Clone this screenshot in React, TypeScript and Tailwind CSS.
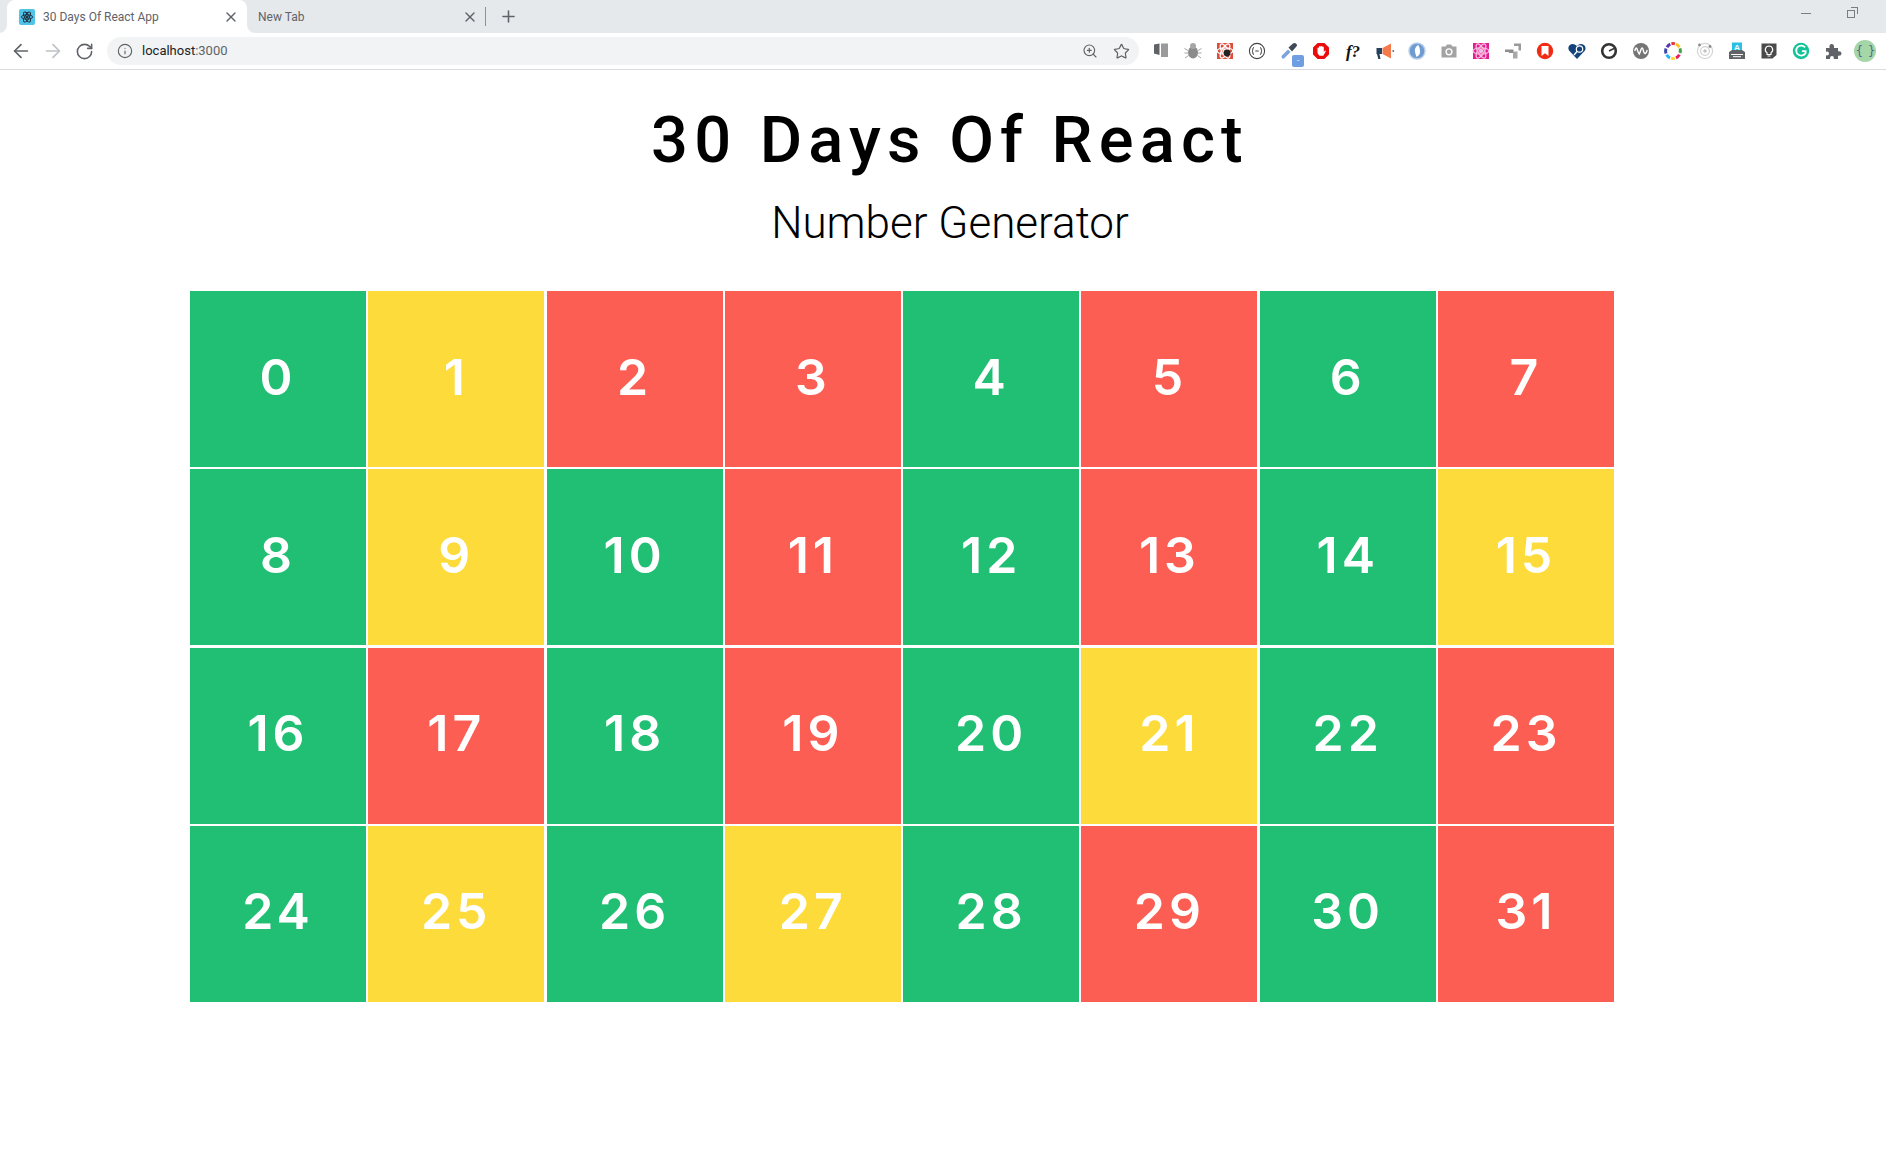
import React from "react";
import { ArrowLeft, ArrowRight, RotateCw, Info, ZoomIn, Star, X, Plus } from "lucide-react";

const G = "bg-[#21bf73]";
const Y = "bg-[#fddb3a]";
const R = "bg-[#fd5e53]";
const colors = [
  G, Y, R, R, G, R, G, R,
  G, Y, G, R, G, R, G, Y,
  G, R, G, R, G, Y, G, R,
  G, Y, G, Y, G, R, G, R,
];

function S({ children, w = 20 }: { children: React.ReactNode; w?: number }) {
  return (
    <svg width={w} height={w} viewBox="0 0 20 20">
      {children}
    </svg>
  );
}

const atom = (stroke: string) => (
  <g fill="none" stroke={stroke} strokeWidth="1.3">
    <ellipse cx="10" cy="10" rx="8" ry="3.2" />
    <ellipse cx="10" cy="10" rx="8" ry="3.2" transform="rotate(60 10 10)" />
    <ellipse cx="10" cy="10" rx="8" ry="3.2" transform="rotate(120 10 10)" />
    <circle cx="10" cy="10" r="1.6" fill={stroke} />
  </g>
);

const extensions: React.ReactNode[] = [
  <S key="a">
    <path d="M3 3.5 8.5 2.5V14L3 12.5Z" fill="#5f6368" />
    <rect x="10" y="2.5" width="7" height="13.5" fill="#9a9a9a" />
  </S>,
  <S key="b">
    <ellipse cx="10" cy="11.5" rx="5" ry="6" fill="#8b8b8b" />
    <circle cx="10" cy="5" r="3" fill="#a5a5a5" />
    <path d="M1.5 7.5 5 9.5M1.5 12H5M2 17 5.5 14.5M18.5 7.5 15 9.5M18.5 12H15M18 17 14.5 14.5" stroke="#a5a5a5" strokeWidth="1" />
  </S>,
  <S key="c">
    <rect x="2" y="2" width="16" height="16" fill="#de4c3c" />
    {atom("#ffffff")}
    <circle cx="12" cy="12" r="3.4" fill="#222222" />
  </S>,
  <S key="d">
    <circle cx="10" cy="10" r="7.6" fill="none" stroke="#444444" strokeWidth="1.1" />
    <path d="M7 6.5Q5.8 6.5 5.8 8V9.2L5 10 5.8 10.8V12Q5.8 13.5 7 13.5M13 6.5Q14.2 6.5 14.2 8V9.2L15 10 14.2 10.8V12Q14.2 13.5 13 13.5M8.3 10H11.7" fill="none" stroke="#444444" strokeWidth="1" />
  </S>,
  <div key="e" className="relative">
    <S>
      <path d="M3 17.5 2.5 15 9 8.5 11.5 11 5 17.5Z" fill="#7aa3dd" />
      <path d="M9.5 6.5 14 2.5Q16 1.5 17.5 3T17 6L13 10.5Z" fill="#3f4a57" />
    </S>
    <div className="absolute right-[-5px] bottom-[-6px] flex h-[12px] w-[12px] items-center justify-center rounded-[2px] bg-[#6f9fe2] text-[8px] leading-none text-white">
      -
    </div>
  </div>,
  <S key="f">
    <path d="M6.6 2H13.4L18 6.6V13.4L13.4 18H6.6L2 13.4V6.6Z" fill="#ea0c0c" />
    <path d="M6.5 9.5V6.8Q7.5 6 8 7V5.5Q9 4.6 9.7 5.5 10.7 4.6 11.4 5.7 12.5 5.2 12.8 6.5V11L14 9.5Q15 9.5 14.6 10.7L12.3 14.8H8.4L6.5 12Z" fill="#ffffff" />
  </S>,
  <div key="g" className="font-['Liberation_Serif',serif] text-[17px] font-bold italic leading-none text-[#111111]">
    f?
  </div>,
  <S key="h">
    <path d="M1.5 7H7V13H4.5L5.5 18H3.3L2 13H1.5Z" fill="#24425f" />
    <path d="M7.5 7 16 2.5V17.5L7.5 13Z" fill="#f47a4b" />
    <rect x="17.5" y="9.3" width="1.6" height="1.4" fill="#24425f" />
  </S>,
  <S key="i">
    <circle cx="10" cy="10" r="8" fill="#6f9bd1" />
    <circle cx="10" cy="10" r="8" fill="none" stroke="#b8cfe8" strokeWidth="1.4" />
    <path d="M11 4Q7 7 8 11T9.5 16Q13.5 14 13 9.5T11 4Z" fill="#ffffff" />
  </S>,
  <S key="j">
    <path d="M2.5 5.5H6.5L8 3.5H12L13.5 5.5H17.5V16.5H2.5Z" fill="#a3a3a3" />
    <circle cx="10" cy="10.8" r="3.6" fill="#ffffff" />
    <circle cx="10" cy="10.8" r="2.2" fill="#a3a3a3" />
  </S>,
  <S key="k">
    <rect x="2" y="2" width="16" height="16" fill="#e21f91" />
    {atom("#f7bde0")}
  </S>,
  <S key="l">
    <path d="M11 2.5H18V9.5L15.5 9.5V5H11Z" fill="#9a9a9a" />
    <path d="M2 8.5H10.5V12H6V11H2Z" fill="#8d8d8d" />
    <rect x="10" y="10.5" width="4.5" height="7" fill="#a8a8a8" />
  </S>,
  <S key="m">
    <circle cx="10" cy="10" r="8.2" fill="#f02a13" />
    <path d="M6.5 5H13.5V15L10 12.3 6.5 15Z" fill="#ffffff" />
  </S>,
  <S key="n">
    <path d="M10 18 2 9.5Q.5 6.5 2.5 4.2 6 1.5 10 5 13 1.5 17 4 19.5 6.5 18 9.5Z" fill="#13437a" />
    <circle cx="12.5" cy="8" r="3.2" fill="#13437a" stroke="#ffffff" strokeWidth="1.2" />
    <path d="M10 10.5 7 14" stroke="#ffffff" strokeWidth="1.4" />
  </S>,
  <S key="o">
    <circle cx="10" cy="10" r="6.8" fill="none" stroke="#333333" strokeWidth="2.6" />
    <path d="M10 10 15 7.5" stroke="#333333" strokeWidth="1.4" />
  </S>,
  <S key="p">
    <circle cx="10" cy="10" r="8" fill="#757575" />
    <path d="M3.8 10Q5 5 6.2 8.5T8.3 13Q9.3 11 10 8.5 11.2 5 12.2 9T14.2 12.5Q15.5 12 16.2 9" fill="none" stroke="#ffffff" strokeWidth="1.4" />
  </S>,
  <S key="q">
    <g fill="none" strokeWidth="3">
      <path d="M4 6.2A7.4 7.4 0 0 1 7.3 3.1" stroke="#5e35b1" />
      <path d="M8.4 2.8A7.4 7.4 0 0 1 12 2.9" stroke="#e53935" />
      <path d="M13 3.2A7.4 7.4 0 0 1 16.4 6.2" stroke="#fbc02d" />
      <path d="M17 7.4A7.4 7.4 0 0 1 17 12" stroke="#43a047" />
      <path d="M16.4 13.6A7.4 7.4 0 0 1 13 16.8" stroke="#e91e63" />
      <path d="M11.8 17.2A7.4 7.4 0 0 1 8 17.1" stroke="#fdd835" />
      <path d="M7 16.8A7.4 7.4 0 0 1 3.6 13.8" stroke="#29b6f6" />
      <path d="M3 12.5A7.4 7.4 0 0 1 3 7.5" stroke="#3949ab" />
    </g>
  </S>,
  <S key="r">
    <circle cx="10" cy="10" r="7.6" fill="none" stroke="#d5d5d5" strokeWidth="1.2" />
    <circle cx="10" cy="10" r="4.4" fill="none" stroke="#d0d0d0" strokeWidth="1.2" />
    <circle cx="10" cy="10" r="1.8" fill="#c4c4c4" />
    <circle cx="4.5" cy="4" r="1.4" fill="#8a8a8a" />
    <circle cx="15" cy="5.5" r="1.4" fill="#8a8a8a" />
  </S>,
  <S key="s">
    <rect x="5" y="1.5" width="10" height="10" fill="#29c0e6" />
    <text x="10" y="10" textAnchor="middle" fontSize="9" fontFamily="'Liberation Sans',sans-serif" fontWeight="700" fill="#ffffff">A</text>
    <path d="M2 18V11L5 9H15L18 11V18Z" fill="#5f6368" />
    <rect x="4" y="13" width="12" height="1" fill="#ffffff" />
    <rect x="6" y="15.2" width="8" height="1" fill="#ffffff" />
  </S>,
  <S key="t">
    <path d="M2.5 2.5H17.5V14L13.5 17.5H2.5Z" fill="#4a4a4a" />
    <path d="M10 5A3.7 3.7 0 0 0 8 11.8V13.5H12V11.8A3.7 3.7 0 0 0 10 5Z" fill="none" stroke="#ffffff" strokeWidth="1.2" />
    <rect x="8.5" y="14.5" width="3" height="1" fill="#ffffff" />
  </S>,
  <S key="u">
    <circle cx="10" cy="10" r="8.2" fill="#15c39a" />
    <path d="M14 6.3A5 5 0 1 0 14.6 12V10.2H11" fill="none" stroke="#ffffff" strokeWidth="1.8" />
  </S>,
  <S key="v">
    <path d="M3 7H6.5Q6 3 8.7 3T11 7H15V10.3Q18.5 9.8 18.5 12.5T15 14.7V18H10.8Q11.2 15 9 15T7 18H3V14.3Q6 15 6 12.5T3 10.7Z" fill="#5f6368" />
  </S>,
  <div key="w" className="flex h-[22px] w-[22px] items-center justify-center rounded-full bg-[#a5d6a7] font-['DejaVu_Sans_Mono',monospace] text-[12px] leading-none tracking-[-1px] text-[#4f6b8a]">
    {"{ }"}
  </div>,
];

function Flare({ side }: { side: "l" | "r" }) {
  return (
    <svg
      width="8"
      height="8"
      viewBox="0 0 8 8"
      className={side === "l" ? "absolute bottom-0 left-[-8px]" : "absolute bottom-0 right-[-8px]"}
    >
      <path d={side === "l" ? "M8 0V8H0A8 8 0 0 0 8 0Z" : "M0 0V8H8A8 8 0 0 1 0 0Z"} fill="#ffffff" />
    </svg>
  );
}

export default function App() {
  return (
    <div className="min-h-[1151px] bg-white font-['Roboto',sans-serif]">
      <div className="flex h-[33px] items-stretch bg-[#e6e9ec] pl-[7px]">
        <div className="relative flex w-[240px] items-center rounded-t-[8px] bg-white pl-[12px] pr-[8px] text-[12px] text-[#5f6368]">
          <Flare side="l" />
          <Flare side="r" />
          <div className="mr-[8px] flex h-[16px] w-[16px] items-center justify-center rounded-[2px] bg-[#4fc3e8]">
            <svg width="14" height="14" viewBox="0 0 20 20">
              {atom("#1d2b3a")}
            </svg>
          </div>
          <span className="flex-1 truncate">30 Days Of React App</span>
          <X size={16} strokeWidth={2} className="text-[#5f6368]" />
        </div>
        <div className="flex w-[238px] items-center pl-[11px] pr-[7px] text-[12px] text-[#5f6368]">
          <span className="flex-1 truncate">New Tab</span>
          <X size={16} strokeWidth={2} />
        </div>
        <div className="my-[7px] w-px bg-[#8d9196]" />
        <div className="flex w-[45px] items-center justify-center text-[#5f6368]">
          <Plus size={19} strokeWidth={2} />
        </div>
        <div className="flex-1" />
        <div className="flex items-center pb-[6px] text-[#6f7276]">
          <div className="w-[46px]">
            <div className="h-px w-[10px] bg-[#7a7d81]" />
          </div>
          <div className="relative mr-[31px] h-[8px] w-[8px] border border-[#7a7d81] bg-[#e6e9ec]">
            <div className="absolute right-[-4px] top-[-4px] h-[7px] w-[7px] border-r border-t border-[#7a7d81]" />
          </div>
        </div>
      </div>

      <div className="flex h-[37px] items-center border-b border-[#d9dbde] bg-white">
        <div className="flex w-[107px] items-center pl-[10px] text-[#5f6368]">
          <ArrowLeft size={22} strokeWidth={1.8} />
          <ArrowRight size={22} strokeWidth={1.8} className="ml-[10px] text-[#bdc1c6]" />
          <RotateCw size={19} strokeWidth={2} className="ml-[11px]" />
        </div>
        <div className="flex h-[28px] w-[1032px] items-center rounded-full bg-[#f1f3f4] pl-[10px] pr-[9px]">
          <Info size={16} strokeWidth={1.7} className="text-[#5f6368]" />
          <span className="ml-[9px] flex-1 text-[13px] text-[#202124]">
            localhost<span className="text-[#5f6368]">:3000</span>
          </span>
          <ZoomIn size={16} strokeWidth={1.7} className="text-[#5f6368]" />
          <Star size={17} strokeWidth={1.7} className="ml-[15px] text-[#5f6368]" />
        </div>
        <div className="ml-[6px] flex items-center">
          {extensions.map((e, i) => (
            <div key={i} className="flex h-[28px] w-[32px] items-center justify-center">
              {e}
            </div>
          ))}
        </div>
      </div>

      <h1 className="mt-[32px] pl-[14px] text-center font-['Roboto',sans-serif] text-[65px] font-medium leading-[76px] tracking-[6.2px] text-black">
        30 Days Of React
      </h1>
      <h2 className="mt-[17px] pl-[14px] text-center font-['Roboto',sans-serif] text-[44px] font-light leading-[56px] text-black">
        Number Generator
      </h2>

      <div className="ml-[190px] mt-[40px] grid h-[711px] w-[1424px] grid-cols-8 grid-rows-4 gap-[2.3px]">
        {colors.map((c, i) => (
          <div
            key={i}
            className={`flex items-center justify-center pb-[4px] font-['Inter',sans-serif] text-[50px] font-semibold tracking-[4px] text-white ${c}`}
          >
            {i}
          </div>
        ))}
      </div>
    </div>
  );
}
